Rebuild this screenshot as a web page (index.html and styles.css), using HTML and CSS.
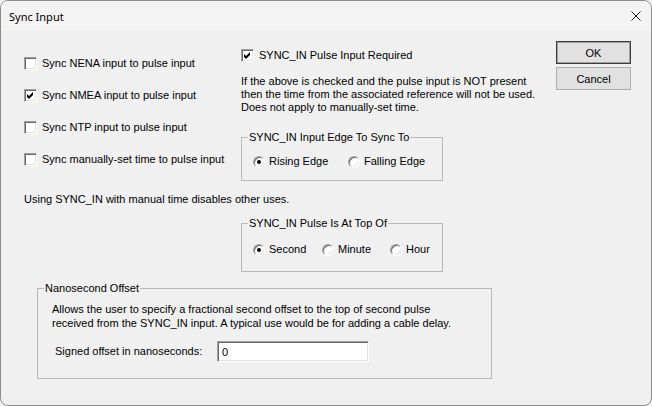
FILE: index.html
```html
<!DOCTYPE html>
<html lang="en">
<head>
    <meta charset="UTF-8">
    <title>Sync Input</title>
    <link rel="stylesheet" href="styles.css">
</head>
<body>
    <div class="window">
        <div class="titlebar">
            <span class="title">Sync Input</span>
            <svg class="close" width="10" height="10" viewBox="0 0 10 10">
                <path d="M0.5 0.5 L9.5 9.5 M9.5 0.5 L0.5 9.5" stroke="#1a1a1a" stroke-width="1" fill="none"/>
            </svg>
        </div>

        <div class="client">
            <div class="top">
                <div class="sources">
                    <label class="check"><span class="box"></span>Sync NENA input to pulse input</label>
                    <label class="check"><span class="box"><svg width="11" height="11" viewBox="0 0 11 11"><polygon points="2,4 4,6 8,2 8,5 4,9 2,7" fill="#000"/></svg></span>Sync NMEA input to pulse input</label>
                    <label class="check"><span class="box"></span>Sync NTP input to pulse input</label>
                    <label class="check"><span class="box"></span>Sync manually-set time to pulse input</label>
                </div>

                <div class="pulse">
                    <label class="check"><span class="box"><svg width="11" height="11" viewBox="0 0 11 11"><polygon points="2,4 4,6 8,2 8,5 4,9 2,7" fill="#000"/></svg></span>SYNC_IN Pulse Input Required</label>
                    <p class="hint">If the above is checked and the pulse input is NOT present<br>then the time from the associated reference will not be used.<br>Does not apply to manually-set time.</p>

                    <fieldset class="group edge">
                        <legend>SYNC_IN Input Edge To Sync To</legend>
                        <div class="radios">
                            <label class="radio"><span class="dot on"></span>Rising Edge</label>
                            <label class="radio"><span class="dot"></span>Falling Edge</label>
                        </div>
                    </fieldset>
                </div>

                <div class="buttons">
                    <button class="btn default">OK</button>
                    <button class="btn">Cancel</button>
                </div>
            </div>

            <p class="note">Using SYNC_IN with manual time disables other uses.</p>

            <fieldset class="group top-of">
                <legend>SYNC_IN Pulse Is At Top Of</legend>
                <div class="radios">
                    <label class="radio"><span class="dot on"></span>Second</label>
                    <label class="radio"><span class="dot"></span>Minute</label>
                    <label class="radio"><span class="dot"></span>Hour</label>
                </div>
            </fieldset>

            <fieldset class="group offset">
                <legend>Nanosecond Offset</legend>
                <p class="desc">Allows the user to specify a fractional second offset to the top of second pulse<br>received from the SYNC_IN input. A typical use would be for adding a cable delay.</p>
                <div class="field">
                    <label for="offset">Signed offset in nanoseconds:</label>
                    <input type="text" id="offset" class="entry" value="0">
                </div>
            </fieldset>
        </div>
    </div>
</body>
</html>
```

FILE: styles.css
```css
* {
    margin: 0;
    padding: 0;
    box-sizing: border-box;
}

body {
    background: #f0f0f0;
    font-family: "Liberation Sans", Arial, sans-serif;
    font-size: 11px;
    line-height: 13px;
    color: #000;
}

.window {
    width: 652px;
    height: 406px;
    border: 1px solid #8c8c8c;
    border-radius: 8px;
    background: #f0f0f0;
    overflow: hidden;
}

.titlebar {
    height: 30px;
    background: #f3f3f3;
    display: flex;
    align-items: center;
    justify-content: space-between;
    padding: 0 10px 0 8px;
}

.title {
    font-family: "Noto Sans", "Open Sans", sans-serif;
    font-size: 11px;
}

.close {
    display: block;
}

.client {
    padding: 0 20px 0 23px;
}

.top {
    display: flex;
    align-items: flex-start;
}

/* left column of source checkboxes */
.sources {
    width: 217px;
    padding-top: 26px;
    display: flex;
    flex-direction: column;
    gap: 19px;
}

.check {
    display: flex;
    align-items: center;
    gap: 5px;
    height: 13px;
    white-space: nowrap;
}

.box {
    width: 13px;
    height: 13px;
    flex-shrink: 0;
    background: #fff;
    border: 1px solid;
    border-color: #a0a0a0 #fff #fff #a0a0a0;
    box-shadow: inset 1px 1px #696969, inset -1px -1px #e3e3e3;
}

.box svg {
    display: block;
}

.pulse {
    width: 202px;
    padding-top: 18px;
}

.hint {
    margin-top: 13px;
    white-space: nowrap;
}

.group {
    border: 1px solid #b9b9b9;
    padding: 11px 0 12px 6px;
}

.group legend {
    padding: 0 1px;
}

.edge {
    margin-top: 17px;
}

.radios {
    display: flex;
    margin-left: 5px;
}

.radio {
    display: flex;
    align-items: center;
    gap: 4px;
    height: 13px;
    white-space: nowrap;
}

.dot {
    width: 12px;
    height: 12px;
    flex-shrink: 0;
    border-radius: 50%;
    background: #fff;
    border: 1px solid;
    border-color: #a0a0a0 #fff #fff #a0a0a0;
    box-shadow: inset 1px 1px #696969, inset -1px -1px #e3e3e3;
    display: flex;
    align-items: center;
    justify-content: center;
}

.dot.on::after {
    content: "";
    width: 4px;
    height: 4px;
    border-radius: 50%;
    background: #000;
}

.edge .radio:first-child {
    width: 95px;
}

.top-of .radio:nth-child(1) {
    width: 69px;
}

.top-of .radio:nth-child(2) {
    width: 68px;
}

.buttons {
    margin-left: auto;
    padding-top: 10px;
    display: flex;
    flex-direction: column;
    gap: 3px;
}

.btn {
    width: 75px;
    height: 23px;
    background: #e1e1e1;
    border: 1px solid #adadad;
    font-family: inherit;
    font-size: 11px;
    color: #000;
}

.btn.default {
    border-color: #3c3c3c;
    box-shadow: inset 0 0 0 1px #a0a0a0;
}

.note {
    margin-top: 12px;
}

.top-of {
    margin: 11px 0 0 217px;
    width: 202px;
    padding: 13px 0 15px 6px;
}

.offset {
    margin: 10px 0 0 13px;
    width: 455px;
    padding: 7px 0 16px 6px;
}

.desc {
    margin-left: 8px;
    line-height: 14px;
    white-space: nowrap;
}

.field {
    display: flex;
    align-items: center;
    margin: 11px 0 0 11px;
}

.field label {
    width: 162px;
}

.entry {
    width: 152px;
    height: 21px;
    background: #fff;
    border: 1px solid;
    border-color: #a0a0a0 #fff #fff #a0a0a0;
    box-shadow: inset 1px 1px #696969, inset -1px -1px #e3e3e3;
    padding: 0 4px;
    font-family: inherit;
    font-size: 11px;
    color: #000;
    outline: none;
}
```
